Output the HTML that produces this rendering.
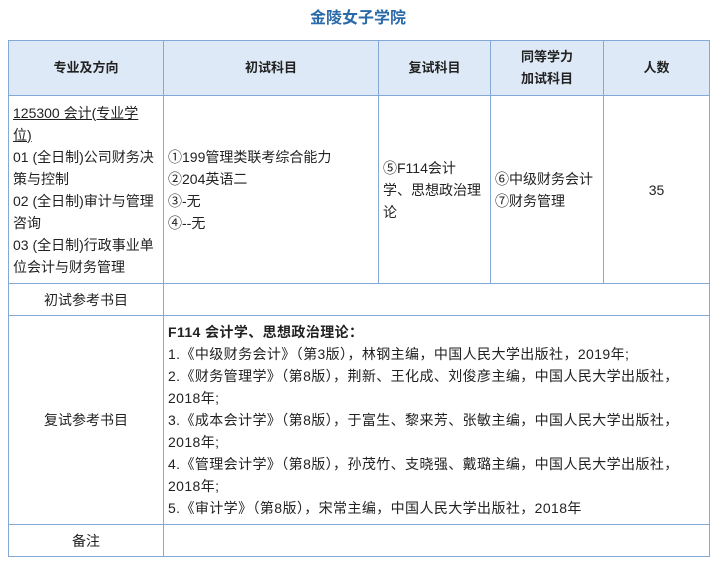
<!DOCTYPE html>
<html><head><meta charset="utf-8"><style>
body{margin:0;background:#fff;font-family:"Liberation Sans","Noto Sans CJK SC",sans-serif;color:#222;}
.t{position:absolute;left:0;top:9px;width:716px;text-align:center;font-size:16px;font-weight:bold;color:#2a6aa8;line-height:20px;}
table{position:absolute;left:8px;top:40px;border-collapse:collapse;table-layout:fixed;width:701px;}
td{border:1px solid #84a8d8;font-size:14px;line-height:22px;padding:0 4px;vertical-align:middle;white-space:nowrap;overflow:hidden;}
tr.h td{background:#dde9f6;font-weight:bold;text-align:center;height:54px;font-size:13px;}
.c{text-align:center}
.b{letter-spacing:0.4px}
u{text-decoration:underline}
</style></head><body>
<div class="t">金陵女子学院</div>
<table>
<colgroup><col style="width:155px"><col style="width:215px"><col style="width:112px"><col style="width:113px"><col style="width:106px"></colgroup>
<tr class="h"><td>专业及方向</td><td>初试科目</td><td>复试科目</td><td>同等学力<br>加试科目</td><td>人数</td></tr>
<tr style="height:188px"><td><u>125300 会计(专业学<br>位)</u><br>01 (全日制)公司财务决<br>策与控制<br>02 (全日制)审计与管理<br>咨询<br>03 (全日制)行政事业单<br>位会计与财务管理</td>
<td>①199管理类联考综合能力<br>②204英语二<br>③-无<br>④--无</td>
<td>⑤F114会计<br>学、思想政治理<br>论</td>
<td>⑥中级财务会计<br>⑦财务管理</td>
<td class="c">35</td></tr>
<tr style="height:32px"><td class="c">初试参考书目</td><td colspan="4"></td></tr>
<tr style="height:209px"><td class="c">复试参考书目</td><td colspan="4" class="b"><b>F114 会计学、思想政治理论：</b><br>1.《中级财务会计》（第3版），林钢主编，中国人民大学出版社，2019年;<br>2.《财务管理学》（第8版），荆新、王化成、刘俊彦主编，中国人民大学出版社，<br>2018年;<br>3.《成本会计学》（第8版），于富生、黎来芳、张敏主编，中国人民大学出版社，<br>2018年;<br>4.《管理会计学》（第8版），孙茂竹、支晓强、戴璐主编，中国人民大学出版社，<br>2018年;<br>5.《审计学》（第8版），宋常主编，中国人民大学出版社，2018年</td></tr>
<tr style="height:32px"><td class="c">备注</td><td colspan="4"></td></tr>
</table>
</body></html>
